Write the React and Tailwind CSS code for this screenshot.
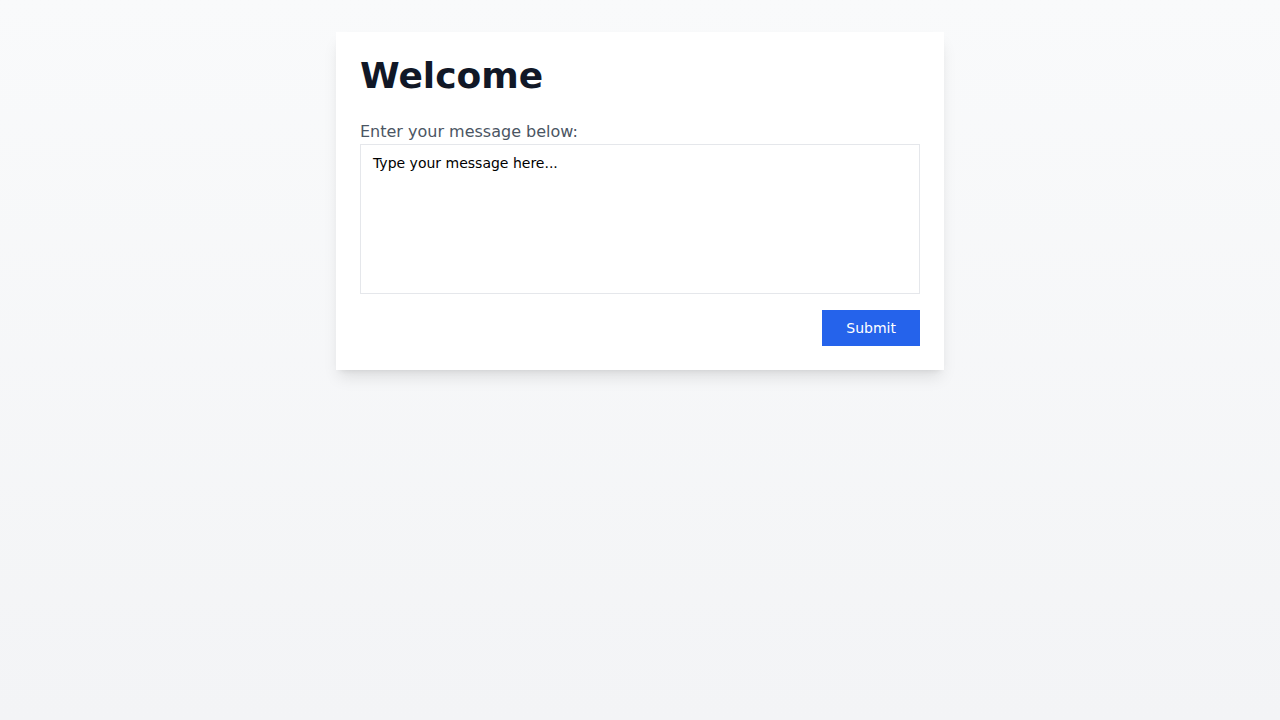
import React from 'react';

export default function App() {
  return (
    <div className="min-h-screen bg-gradient-to-b from-[#f9fafb] to-[#f3f4f6] pt-8 font-['DejaVu_Sans',sans-serif]">
      <div className="mx-auto w-[608px] bg-white p-6 shadow-lg">
        <h1 className="text-4xl font-bold text-[#111827] leading-10">Welcome</h1>
        <label className="mt-6 block text-base leading-6 text-[#4b5563]">Enter your message below:</label>
        <textarea
          className="block h-[150px] w-full resize-none border border-[#e5e7eb] px-3 py-2 text-sm leading-5 text-black outline-none"
          defaultValue="Type your message here..."
        />
        <div className="mt-4 flex justify-end">
          <button className="h-9 bg-[#2563eb] px-6 text-sm text-white">Submit</button>
        </div>
      </div>
    </div>
  );
}
